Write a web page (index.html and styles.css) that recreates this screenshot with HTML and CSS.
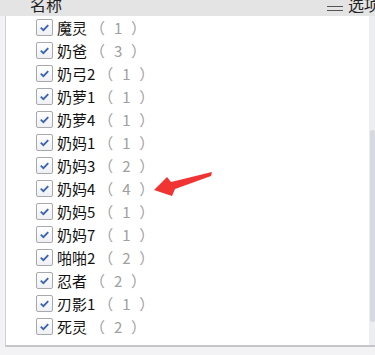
FILE: index.html
```html
<!DOCTYPE html>
<html lang="zh">
<head>
<meta charset="utf-8">
<link rel="stylesheet" href="styles.css">
</head>
<body>
<div class="header">
  <div class="header-inner">
    <span class="col-name">名称</span>
    <span class="col-opt"><span class="menu-ico"></span>选项</span>
  </div>
</div>
<div class="panel">
  <ul class="list">
    <li class="row"><span class="cb"><svg viewBox="0 0 16 16"><path d="M4 8.2 L6.8 10.8 L12 5.4"/></svg></span><span class="name">魔灵</span><span class="count">（ 1 ）</span></li>
    <li class="row"><span class="cb"><svg viewBox="0 0 16 16"><path d="M4 8.2 L6.8 10.8 L12 5.4"/></svg></span><span class="name">奶爸</span><span class="count">（ 3 ）</span></li>
    <li class="row"><span class="cb"><svg viewBox="0 0 16 16"><path d="M4 8.2 L6.8 10.8 L12 5.4"/></svg></span><span class="name">奶弓2</span><span class="count">（ 1 ）</span></li>
    <li class="row"><span class="cb"><svg viewBox="0 0 16 16"><path d="M4 8.2 L6.8 10.8 L12 5.4"/></svg></span><span class="name">奶萝1</span><span class="count">（ 1 ）</span></li>
    <li class="row"><span class="cb"><svg viewBox="0 0 16 16"><path d="M4 8.2 L6.8 10.8 L12 5.4"/></svg></span><span class="name">奶萝4</span><span class="count">（ 1 ）</span></li>
    <li class="row"><span class="cb"><svg viewBox="0 0 16 16"><path d="M4 8.2 L6.8 10.8 L12 5.4"/></svg></span><span class="name">奶妈1</span><span class="count">（ 1 ）</span></li>
    <li class="row"><span class="cb"><svg viewBox="0 0 16 16"><path d="M4 8.2 L6.8 10.8 L12 5.4"/></svg></span><span class="name">奶妈3</span><span class="count">（ 2 ）</span></li>
    <li class="row"><span class="cb"><svg viewBox="0 0 16 16"><path d="M4 8.2 L6.8 10.8 L12 5.4"/></svg></span><span class="name">奶妈4</span><span class="count">（ 4 ）</span></li>
    <li class="row"><span class="cb"><svg viewBox="0 0 16 16"><path d="M4 8.2 L6.8 10.8 L12 5.4"/></svg></span><span class="name">奶妈5</span><span class="count">（ 1 ）</span></li>
    <li class="row"><span class="cb"><svg viewBox="0 0 16 16"><path d="M4 8.2 L6.8 10.8 L12 5.4"/></svg></span><span class="name">奶妈7</span><span class="count">（ 1 ）</span></li>
    <li class="row"><span class="cb"><svg viewBox="0 0 16 16"><path d="M4 8.2 L6.8 10.8 L12 5.4"/></svg></span><span class="name">啪啪2</span><span class="count">（ 2 ）</span></li>
    <li class="row"><span class="cb"><svg viewBox="0 0 16 16"><path d="M4 8.2 L6.8 10.8 L12 5.4"/></svg></span><span class="name">忍者</span><span class="count">（ 2 ）</span></li>
    <li class="row"><span class="cb"><svg viewBox="0 0 16 16"><path d="M4 8.2 L6.8 10.8 L12 5.4"/></svg></span><span class="name">刃影1</span><span class="count">（ 1 ）</span></li>
    <li class="row"><span class="cb"><svg viewBox="0 0 16 16"><path d="M4 8.2 L6.8 10.8 L12 5.4"/></svg></span><span class="name">死灵</span><span class="count">（ 2 ）</span></li>
  </ul>
  <div class="scrollbar"><div class="thumb"></div></div>
  <svg class="arrow" viewBox="0 0 64 26" width="64" height="26">
    <polygon points="4,20 17,7 21,12 62,2 61,6 25,19 22,26"/>
  </svg>
</div>
</body>
</html>
```

FILE: styles.css
```css
html, body {
  margin: 0;
  padding: 0;
}
body {
  background: #f3f3f5;
  font-family: "Noto Sans CJK SC", "Noto Sans", sans-serif;
  color: #111;
  width: 375px;
  height: 355px;
  overflow: hidden;
}
.header {
  height: 16px;
  background: #e4e4e4;
  overflow: hidden;
}
.header-inner {
  display: flex;
  justify-content: space-between;
  margin-top: -7px;
  font-size: 16px;
  line-height: 22px;
  color: #222;
  padding-left: 30px;
}
.col-opt {
  display: flex;
  align-items: center;
  white-space: nowrap;
  margin-right: -5px;
}
.menu-ico {
  display: inline-block;
  width: 16px;
  height: 3px;
  border-top: 1px solid #555;
  border-bottom: 1px solid #555;
  margin-right: 5px;
  margin-top: 9px;
}
.panel {
  position: relative;
  margin-left: 5px;
  height: 329px;
  background: #fff;
  border-left: 1px solid #cfcfd3;
  border-bottom: 2px solid #c6c6ca;
  display: flex;
}
.list {
  flex: 1;
  list-style: none;
  margin: 0;
  padding: 0 0 0 30px;
}
.row {
  height: 23px;
  display: flex;
  align-items: center;
  font-size: 15px;
}
.cb {
  width: 15px;
  height: 15px;
  border: 1px solid #a8a8ad;
  border-radius: 2px;
  background: linear-gradient(#ffffff, #eef0f4);
  display: flex;
  margin-right: 4px;
  flex: none;
}
.cb svg {
  width: 15px;
  height: 15px;
}
.cb path {
  fill: none;
  stroke: #3d63b2;
  stroke-width: 2;
}
.name {
  color: #111;
}
.count {
  color: #a0a0a0;
  word-spacing: 5.5px;
  font-size: 15px;
  margin-left: 3px;
}
.scrollbar {
  width: 6px;
  background: #eceef1;
  display: flex;
  flex-direction: column;
}
.thumb {
  margin-top: 114px;
  margin-left: 1px;
  height: 192px;
  background: #d6d9df;
  border-radius: 3px;
}
.arrow {
  position: absolute;
  left: 144px;
  top: 154px;
}
.arrow polygon {
  fill: #ef3433;
}
```
